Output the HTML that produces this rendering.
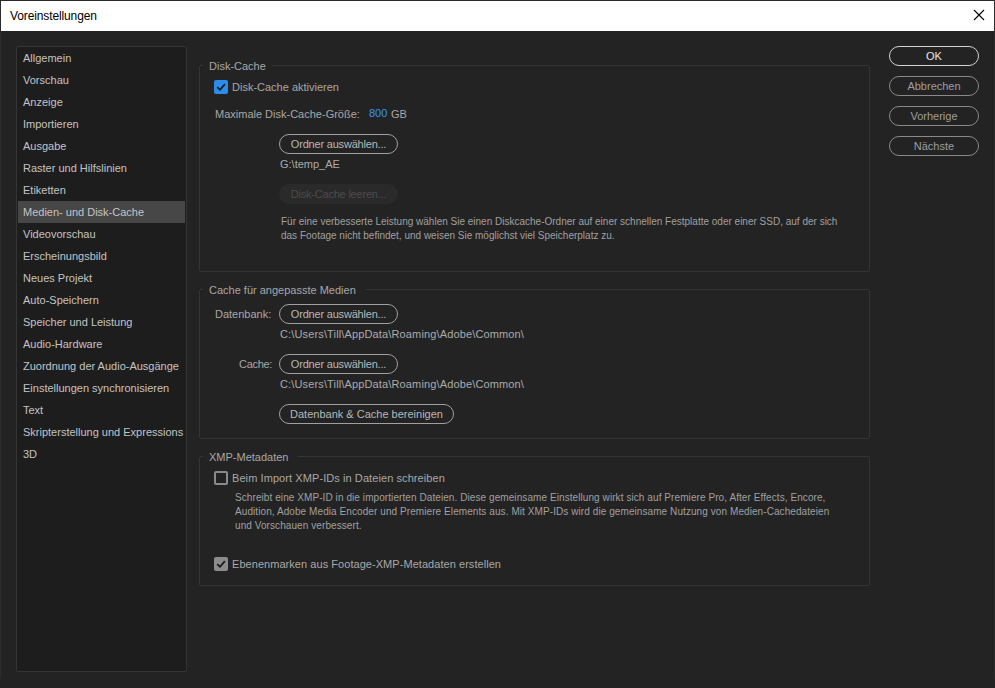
<!DOCTYPE html>
<html><head><meta charset="utf-8">
<style>
*{margin:0;padding:0;box-sizing:border-box}
html,body{width:995px;height:688px;overflow:hidden;background:#232323}
body{position:relative;font-family:"Liberation Sans",sans-serif;font-size:11px;color:#a8a8a8}
.t{position:absolute;white-space:nowrap;line-height:14px}
#win{position:absolute;left:0;top:0;width:995px;height:678px;border-left:1px solid #2c2c2c;border-right:1px solid #2c2c2c;border-top:1px solid #2a2a2a}
#title{position:absolute;left:1px;top:1px;width:993px;height:30px;background:#fff}
#title .t{font-size:12px;color:#000;left:9px;top:8px;letter-spacing:-0.12px}
#close{position:absolute;left:972px;top:8px;width:12px;height:12px}
#side{position:absolute;left:16px;top:46px;width:171px;height:626px;background:#1d1d1d;border:1px solid #353535;border-radius:2px}
.si{position:absolute;left:6px;color:#c4c4c4;font-size:11px}
.sel{position:absolute;left:1px;top:154px;width:167px;height:22px;background:#474747}
.grp{position:absolute;left:199px;width:671px;border:1px solid #343434;border-radius:2px}
.gt{position:absolute;background:#232323;padding:0 6px;color:#a8a8a8}
.btn{position:absolute;height:20px;border:1px solid #a0a0a0;border-radius:10px;color:#b8b8b8;text-align:center;line-height:18px;font-size:11px}
.rb{left:889px;width:90px;border-color:#8a8a8a;color:#9e9e9e}
.cb{position:absolute;width:14px;height:14px;border-radius:2px}
.p{font-size:10px;color:#a0a0a0}
.el{letter-spacing:-0.2px}
</style></head><body>
<div id="win"></div>
<div id="title"><div class="t">Voreinstellungen</div>
<svg id="close" viewBox="0 0 12 12"><path d="M1 1L11 11M11 1L1 11" stroke="#000" stroke-width="1.1"/></svg>
</div>

<div id="side">
<div class="sel"></div>
<div class="t si" style="top:4px">Allgemein</div>
<div class="t si" style="top:26px">Vorschau</div>
<div class="t si" style="top:48px">Anzeige</div>
<div class="t si" style="top:70px">Importieren</div>
<div class="t si" style="top:92px">Ausgabe</div>
<div class="t si" style="top:114px">Raster und Hilfslinien</div>
<div class="t si" style="top:136px">Etiketten</div>
<div class="t si" style="top:158px">Medien- und Disk-Cache</div>
<div class="t si" style="top:180px">Videovorschau</div>
<div class="t si" style="top:202px">Erscheinungsbild</div>
<div class="t si" style="top:224px">Neues Projekt</div>
<div class="t si" style="top:246px">Auto-Speichern</div>
<div class="t si" style="top:268px">Speicher und Leistung</div>
<div class="t si" style="top:290px">Audio-Hardware</div>
<div class="t si" style="top:312px">Zuordnung der Audio-Ausgänge</div>
<div class="t si" style="top:334px">Einstellungen synchronisieren</div>
<div class="t si" style="top:356px">Text</div>
<div class="t si" style="top:378px">Skripterstellung und Expressions</div>
<div class="t si" style="top:400px">3D</div>
</div>

<!-- Group 1 -->
<div class="grp" style="top:65px;height:207px"></div>
<div class="t gt" style="left:203px;top:59px">Disk-Cache</div>
<div class="cb" style="left:214px;top:80px;background:#2d8ceb"><svg width="14" height="14" viewBox="0 0 14 14"><path d="M3.2 7.1L6 9.8L10.9 4.2" fill="none" stroke="#1b1b1b" stroke-width="1.8"/></svg></div>
<div class="t" style="left:232px;top:80px">Disk-Cache aktivieren</div>
<div class="t" style="left:215px;top:107px">Maximale Disk-Cache-Größe:</div>
<div class="t" style="left:369px;top:106px;color:#3a93f2">800</div>
<div class="t" style="left:391px;top:107px">GB</div>
<div class="btn el" style="left:279px;top:134px;width:119px">Ordner auswählen...</div>
<div class="t" style="left:280px;top:157px;color:#ababab">G:\temp_AE</div>
<div class="btn el" style="left:279px;top:184px;width:119px;border:none;background:#2a2a2a;color:#4c4c4c;line-height:20px">Disk-Cache leeren...</div>
<div class="t p" style="left:281px;top:215px">Für eine verbesserte Leistung wählen Sie einen Diskcache-Ordner auf einer schnellen Festplatte oder einer SSD, auf der sich</div>
<div class="t p" style="left:281px;top:229px">das Footage nicht befindet, und weisen Sie möglichst viel Speicherplatz zu.</div>

<!-- Group 2 -->
<div class="grp" style="top:289px;height:150px"></div>
<div class="t gt" style="left:203px;top:283px;padding-right:10px">Cache für angepasste Medien</div>
<div class="t" style="left:215px;top:307px">Datenbank:</div>
<div class="btn el" style="left:279px;top:304px;width:119px">Ordner auswählen...</div>
<div class="t" style="left:280px;top:327px;color:#ababab;letter-spacing:0.14px">C:\Users\Till\AppData\Roaming\Adobe\Common\</div>
<div class="t" style="left:239px;top:357px;letter-spacing:-0.3px">Cache:</div>
<div class="btn el" style="left:279px;top:354px;width:119px">Ordner auswählen...</div>
<div class="t" style="left:280px;top:377px;color:#ababab;letter-spacing:0.14px">C:\Users\Till\AppData\Roaming\Adobe\Common\</div>
<div class="btn" style="left:279px;top:404px;width:175px">Datenbank &amp; Cache bereinigen</div>

<!-- Group 3 -->
<div class="grp" style="top:456px;height:130px"></div>
<div class="t gt" style="left:203px;top:450px;padding-right:10px">XMP-Metadaten</div>
<div class="cb" style="left:214px;top:471px;border:2px solid #8a8a8a"></div>
<div class="t" style="left:232px;top:471px;letter-spacing:0.08px">Beim Import XMP-IDs in Dateien schreiben</div>
<div class="t p" style="left:235px;top:491px;letter-spacing:0.08px">Schreibt eine XMP-ID in die importierten Dateien. Diese gemeinsame Einstellung wirkt sich auf Premiere Pro, After Effects, Encore,</div>
<div class="t p" style="left:235px;top:505px;letter-spacing:0.08px">Audition, Adobe Media Encoder und Premiere Elements aus. Mit XMP-IDs wird die gemeinsame Nutzung von Medien-Cachedateien</div>
<div class="t p" style="left:235px;top:519px;letter-spacing:0.08px">und Vorschauen verbessert.</div>
<div class="cb" style="left:214px;top:557px;background:#8c8c8c"><svg width="14" height="14" viewBox="0 0 14 14"><path d="M3.2 7.1L6 9.8L10.9 4.2" fill="none" stroke="#1b1b1b" stroke-width="1.8"/></svg></div>
<div class="t" style="left:232px;top:557px;letter-spacing:0.05px">Ebenenmarken aus Footage-XMP-Metadaten erstellen</div>

<!-- Right buttons -->
<div class="btn rb" style="top:46px;border-color:#d4d4d4;color:#e6e6e6">OK</div>
<div class="btn rb" style="top:76px">Abbrechen</div>
<div class="btn rb" style="top:106px">Vorherige</div>
<div class="btn rb" style="top:136px">Nächste</div>
</body></html>
